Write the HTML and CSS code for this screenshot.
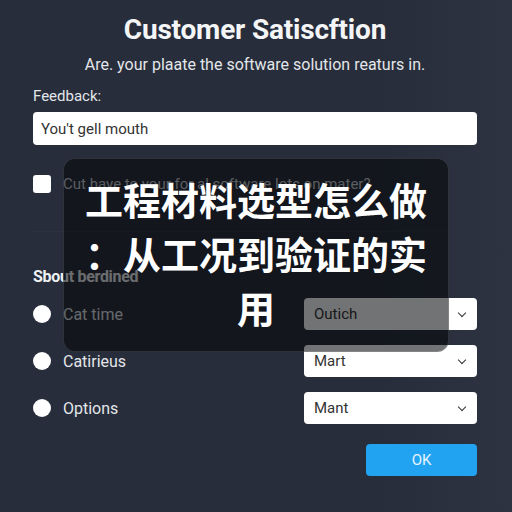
FILE: index.html
```html
<!DOCTYPE html>
<html lang="en">
<head>
  <meta charset="UTF-8">
  <meta name="viewport" content="width=device-width, initial-scale=1.0">
  <title>Customer Satisfaction</title>
  <link rel="stylesheet" href="styles.css">
</head>
<body>
  <div class="container">
    <h1>Customer Satiscftion</h1>
    <p class="subtitle">Are. your plaate the software solution reaturs in.</p>
    <label class="field-label" for="feedback">Feedback:</label>
    <input id="feedback" class="text-input" type="text" value="You't gell mouth">
    <label class="check-row">
      <span class="checkbox"></span>
      <span class="check-text">Cut have to your for al software lots on mater?</span>
    </label>
    <hr class="divider">
    <h2>Sbout berdined</h2>
    <div class="option-row">
      <span class="radio"></span>
      <span class="option-text">Cat time</span>
      <div class="select">Outich<span class="chevron"></span></div>
    </div>
    <div class="option-row">
      <span class="radio"></span>
      <span class="option-text">Catirieus</span>
      <div class="select">Mart<span class="chevron"></span></div>
    </div>
    <div class="option-row">
      <span class="radio"></span>
      <span class="option-text">Options</span>
      <div class="select">Mant<span class="chevron"></span></div>
    </div>
    <div class="actions">
      <button class="ok-button">OK</button>
    </div>
  </div>
  <div class="overlay">
    <p class="overlay-title">工程材料选型怎么做：从工况到验证的实用</p>
  </div>
</body>
</html>
```

FILE: styles.css
```css
body {
  margin: 0;
  width: 512px;
  height: 512px;
  overflow: hidden;
  font-family: Roboto, "Noto Sans", sans-serif;
  color: #e8eaee;
  background: linear-gradient(90deg, #272d3a 0%, #272d3a 75%, #2d3340 100%);
}
.container {
  display: flex;
  flex-direction: column;
  margin: 0 35px 0 33px;
  padding-top: 13px;
}
h1 {
  margin: 0;
  font-size: 28px;
  font-weight: 700;
  text-align: center;
  color: #f4f5f7;
  letter-spacing: -0.2px;
}
.subtitle {
  margin: 9px 0 0;
  font-size: 16px;
  text-align: center;
  color: #e3e6ea;
}
.field-label {
  margin-top: 13px;
  font-size: 15px;
  color: #e3e6ea;
}
.text-input {
  margin-top: 7px;
  height: 33px;
  box-sizing: border-box;
  border: none;
  border-radius: 4px;
  padding: 0 8px;
  font-family: Roboto, "Noto Sans", sans-serif;
  font-size: 15px;
  color: #333;
  background: #fff;
}
.check-row {
  display: flex;
  align-items: center;
  gap: 12px;
  margin-top: 30px;
}
.checkbox {
  width: 18px;
  height: 18px;
  border-radius: 3px;
  background: #fff;
}
.check-text {
  font-size: 15px;
  color: #c8ccd3;
}
.divider {
  margin: 38px 0 0;
  border: none;
  border-top: 1px solid #2c3240;
}
h2 {
  margin: 35px 0 0;
  font-size: 16px;
  font-weight: 700;
  color: #eef0f3;
  letter-spacing: -0.3px;
}
.option-row {
  display: flex;
  align-items: center;
  gap: 12px;
  height: 32px;
  margin-top: 12px;
}
.option-row + .option-row {
  margin-top: 15px;
}
.radio {
  width: 18px;
  height: 18px;
  border-radius: 50%;
  background: #fff;
}
.option-text {
  flex: 1;
  font-size: 16px;
  color: #e3e6ea;
}
.select {
  display: flex;
  align-items: center;
  justify-content: space-between;
  width: 173px;
  height: 32px;
  box-sizing: border-box;
  padding: 0 12px 0 10px;
  border-radius: 4px;
  background: #fff;
  font-size: 15px;
  color: #333;
}
.chevron {
  width: 5px;
  height: 5px;
  margin-top: -3px;
  border-right: 1.6px solid #333;
  border-bottom: 1.6px solid #333;
  transform: rotate(45deg);
}
.actions {
  display: flex;
  justify-content: flex-end;
  margin-top: 20px;
}
.ok-button {
  width: 111px;
  height: 32px;
  border: none;
  border-radius: 4px;
  background: #22a3f2;
  font-family: Roboto, "Noto Sans", sans-serif;
  font-size: 15px;
  color: #e6f4ff;
}
.overlay {
  position: absolute;
  left: 63px;
  top: 158px;
  width: 386px;
  height: 194px;
  box-sizing: border-box;
  display: flex;
  align-items: center;
  justify-content: center;
  padding: 0 18px;
  border: 1px solid rgba(255, 255, 255, 0.12);
  border-radius: 12px;
  background: rgba(4, 5, 8, 0.56);
}
.overlay-title {
  margin: -4px 0 0;
  font-family: "Noto Sans CJK SC", sans-serif;
  font-size: 38px;
  font-weight: 700;
  line-height: 54px;
  text-align: center;
  color: #fff;
  line-break: anywhere;
}
```
